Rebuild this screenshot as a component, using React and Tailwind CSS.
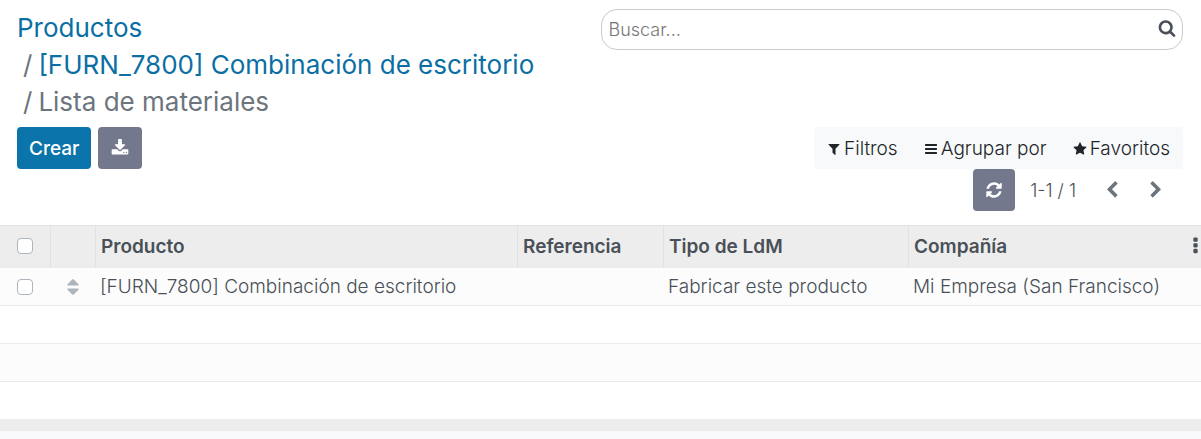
const ICONS = {
  search:
    "M1216 832q0-185-131.5-316.5t-316.5-131.5-316.5 131.5-131.5 316.5 131.5 316.5 316.5 131.5 316.5-131.5 131.5-316.5zm512 832q0 52-38 90t-90 38q-54 0-90-38l-343-342q-179 124-399 124-143 0-273.5-55.5t-225-150-150-225-55.5-273.5 55.5-273.5 150-225 225-150 273.5-55.5 273.5 55.5 225 150 150 225 55.5 273.5q0 220-124 399l343 343q37 37 37 90z",
  download:
    "M1344 1344q0-26-19-45t-45-19-45 19-19 45 19 45 45 19 45-19 19-45zm256 0q0-26-19-45t-45-19-45 19-19 45 19 45 45 19 45-19 19-45zm128-224v320q0 40-28 68t-68 28h-1472q-40 0-68-28t-28-68v-320q0-40 28-68t68-28h465l135 136q58 56 136 56t136-56l136-136h464q40 0 68 28t28 68zm-325-569q17 41-14 70l-448 448q-18 19-45 19t-45-19l-448-448q-31-29-14-70 17-39 59-39h256v-448q0-26 19-45t45-19h256q26 0 45 19t19 45v448h256q42 0 59 39z",
  refresh:
    "M1639 1056q0 5-1 7-64 268-268 434.5t-478 166.5q-146 0-282.5-55t-243.5-157l-129 129q-19 19-45 19t-45-19-19-45v-448q0-26 19-45t45-19h448q26 0 45 19t19 45-19 45l-137 137q71 66 161 102t187 36q134 0 250-65t186-179q11-17 53-117 8-23 30-23h192q13 0 22.5 9.5t9.5 22.5zm25-800v448q0 26-19 45t-45 19h-448q-26 0-45-19t-19-45 19-45l138-138q-148-137-349-137-134 0-250 65t-186 179q-11 17-53 117-8 23-30 23h-199q-13 0-22.5-9.5t-9.5-22.5v-7q65-268 270-434.5t480-166.5q146 0 284 55.5t245 156.5l130-129q19-19 45-19t45 19 19 45z",
  filter:
    "M1595 295q17 41-14 70l-493 493v742q0 42-39 59-13 5-25 5-27 0-45-19l-256-256q-19-19-19-45v-486l-493-493q-31-29-14-70 17-39 59-39h1280q42 0 59 39z",
  bars:
    "M1664 1344v128q0 26-19 45t-45 19h-1408q-26 0-45-19t-19-45v-128q0-26 19-45t45-19h1408q26 0 45 19t19 45zm0-512v128q0 26-19 45t-45 19h-1408q-26 0-45-19t-19-45v-128q0-26 19-45t45-19h1408q26 0 45 19t19 45zm0-512v128q0 26-19 45t-45 19h-1408q-26 0-45-19t-19-45v-128q0-26 19-45t45-19h1408q26 0 45 19t19 45z",
  star:
    "M1728 647q0 22-26 48l-363 354 86 500q1 7 1 20 0 21-10.5 35.5t-30.5 14.5q-19 0-40-12l-449-236-449 236q-22 12-40 12-21 0-31.5-14.5t-10.5-35.5q0-6 2-20l86-500-364-354q-25-27-25-48 0-37 56-46l502-73 225-455q19-41 49-41t49 41l225 455 502 73q56 9 56 46z",
  left:
    "M1427 301l-531 531 531 531q19 19 19 45t-19 45l-166 166q-19 19-45 19t-45-19l-742-742q-19-19-19-45t19-45l742-742q19-19 45-19t45 19l166 166q19 19 19 45t-19 45z",
  right:
    "M1363 877l-742 742q-19 19-45 19t-45-19l-166-166q-19-19-19-45t19-45l531-531-531-531q-19-19-19-45t19-45l166-166q19-19 45-19t45 19l742 742q19 19 19 45t-19 45z",
  sort:
    "M1408 1088q0 26-19 45l-448 448q-19 19-45 19t-45-19l-448-448q-19-19-19-45t19-45 45-19h896q26 0 45 19t19 45zm0-384q0 26-19 45t-45 19h-896q-26 0-45-19t-19-45 19-45l448-448q19-19 45-19t45 19l448 448q19 19 19 45z",
  dots:
    "M1088 1248v192q0 40-28 68t-68 28h-192q-40 0-68-28t-28-68v-192q0-40 28-68t68-28h192q40 0 68 28t28 68zm0-512v192q0 40-28 68t-68 28h-192q-40 0-68-28t-28-68v-192q0-40 28-68t68-28h192q40 0 68 28t28 68zm0-512v192q0 40-28 68t-68 28h-192q-40 0-68-28t-28-68v-192q0-40 28-68t68-28h192q40 0 68 28t28 68z",
};

function Icon({ name, className, viewBox = "0 0 1792 1792" }) {
  return (
    <svg viewBox={viewBox} fill="currentColor" aria-hidden="true" className={className}>
      <path d={ICONS[name]} />
    </svg>
  );
}

const CHECKBOX =
  "block size-4 appearance-none rounded border border-[#adb5bd] bg-white checked:border-[#0b74aa] checked:bg-[#0b74aa]";
const HEAD = "border-l border-[#dee2e6] pl-[5px] text-left font-semibold";
const CELL = "pl-[5px] font-light";

function Breadcrumbs() {
  return (
    <nav aria-label="Ruta" className="text-[26px] leading-[37px] text-[#6c757d]">
      <ol>
        <li>
          <a href="#productos" className="text-[#0b6fa4]">Productos</a>
        </li>
        <li className="flex gap-1.5 pl-1.5">
          <span>/</span>
          <a href="#furn-7800" className="text-[#0b6fa4]">[FURN_7800] Combinación de escritorio</a>
        </li>
        <li className="flex gap-1.5 pl-1.5" aria-current="page">
          <span>/</span>
          <span>Lista de materiales</span>
        </li>
      </ol>
    </nav>
  );
}

function MenuButton({ icon, children }) {
  return (
    <button type="button" className="flex h-[42px] items-center gap-[3px] px-[13px]">
      <Icon name={icon} className="mt-0.5 size-[14px]" />
      {children}
    </button>
  );
}

export default function App() {
  return (
    <div className="min-h-screen bg-[#f8f9fa] font-['Inter','Noto_Sans',sans-serif] text-[19px] leading-[27px] text-[#495057]">
      <header className="grid grid-cols-2 bg-white pb-[14px]">
        <div className="pt-[9px] pl-[17px]">
          <Breadcrumbs />
          <div className="mt-[7px] flex gap-[7px]">
            <button type="button" className="h-[42px] rounded bg-[#0b74aa] px-3 font-medium text-white">
              Crear
            </button>
            <button
              type="button"
              aria-label="Exportar"
              className="flex h-[42px] w-11 items-center justify-center rounded bg-[#74788d] text-white"
            >
              <Icon name="download" className="size-[18px]" />
            </button>
          </div>
        </div>
        <div className="flex flex-col items-end pt-[9px] pr-[18px]">
          <div role="search" className="flex h-[41px] w-full items-center rounded-2xl border border-[#ccc] pr-[6px] pl-[7px]">
            <input
              type="text"
              aria-label="Buscar"
              placeholder="Buscar..."
              className="min-w-0 flex-1 bg-transparent text-[18px] font-light outline-none placeholder:text-[#757575]"
            />
            <button type="button" aria-label="Buscar" className="pb-1">
              <Icon name="search" className="size-[18px]" />
            </button>
          </div>
          <div className="mt-[77px] flex rounded bg-[#f8f9fa] font-light text-[#212529]">
            <MenuButton icon="filter">Filtros</MenuButton>
            <MenuButton icon="bars">Agrupar por</MenuButton>
            <MenuButton icon="star">Favoritos</MenuButton>
          </div>
          <div className="flex items-center pr-[5px] text-[18px] font-light">
            <button
              type="button"
              aria-label="Actualizar"
              className="flex size-[42px] items-center justify-center rounded bg-[#74788d] text-white"
            >
              <Icon name="refresh" className="size-[18px]" />
            </button>
            <span className="mr-[14px] ml-[15px]">1-1 / 1</span>
            <button type="button" aria-label="Anterior" className="flex h-10 w-11 items-center justify-center text-[#6c757d]">
              <Icon name="left" className="size-[18px]" />
            </button>
            <button type="button" aria-label="Siguiente" className="flex h-10 w-11 items-center justify-center text-[#6c757d]">
              <Icon name="right" className="size-[18px]" />
            </button>
          </div>
        </div>
      </header>
      <table className="w-full table-fixed border-separate border-spacing-0 bg-white">
        <colgroup>
          <col className="w-[50px]" />
          <col className="w-[45px]" />
          <col />
          <col className="w-[146px]" />
          <col className="w-[245px]" />
          <col className="w-[278px]" />
          <col className="w-[15px]" />
        </colgroup>
        <thead className="bg-[#ededed]">
          <tr className="h-[43px] *:border-t *:border-b-2 *:border-t-[#dee2e6] *:border-b-[#e9ecef]">
            <th className="pl-[17px]">
              <input type="checkbox" aria-label="Seleccionar todo" className={CHECKBOX} />
            </th>
            <th className="border-l border-[#dee2e6]" />
            <th className={HEAD}>Producto</th>
            <th className={HEAD}>Referencia</th>
            <th className={HEAD}>Tipo de LdM</th>
            <th className={HEAD}>Compañía</th>
            <th>
              <button type="button" aria-label="Columnas opcionales" className="flex pl-[7px]">
                <Icon name="dots" viewBox="704 0 384 1792" className="h-5 w-[5px]" />
              </button>
            </th>
          </tr>
        </thead>
        <tbody className="*:h-[38px] *:last:h-[37px] *:not-last:*:border-b *:*:border-[#e9ecef] *:odd:bg-[#fcfcfc] *:even:bg-white">
          <tr>
            <td className="pl-[17px]">
              <input type="checkbox" aria-label="Seleccionar [FURN_7800]" className={CHECKBOX} />
            </td>
            <td>
              <Icon name="sort" className="mx-auto size-[20px] text-[#adb5bd]" />
            </td>
            <td className={CELL}>[FURN_7800] Combinación de escritorio</td>
            <td className={CELL} />
            <td className={CELL}>Fabricar este producto</td>
            <td className={CELL}>Mi Empresa (San Francisco)</td>
            <td />
          </tr>
          <tr><td colSpan={7} /></tr>
          <tr><td colSpan={7} /></tr>
          <tr><td colSpan={7} /></tr>
        </tbody>
        <tfoot>
          <tr className="h-3 bg-[#ededed]"><td colSpan={7} /></tr>
        </tfoot>
      </table>
    </div>
  );
}
